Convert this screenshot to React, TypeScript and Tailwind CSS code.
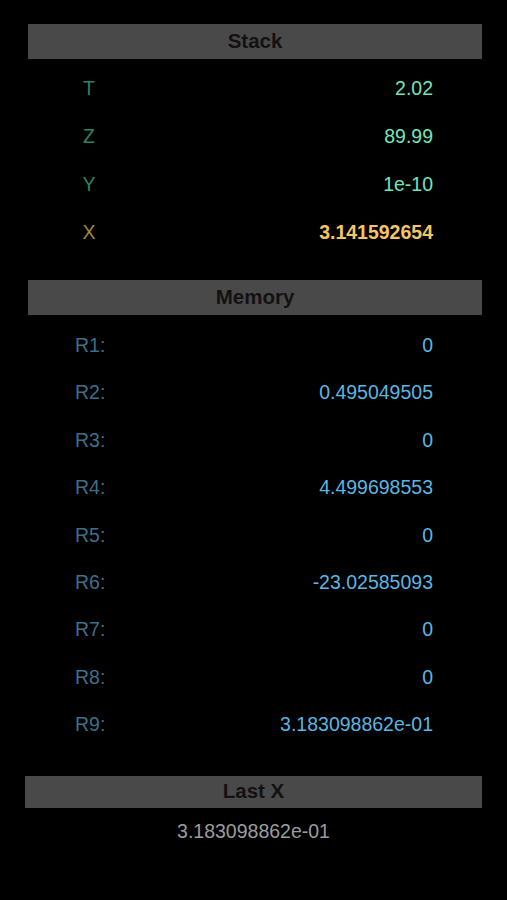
const stack = [
  { label: 'T', value: '2.02' },
  { label: 'Z', value: '89.99' },
  { label: 'Y', value: '1e-10' },
];

const memory = [
  ['R1:', '0'],
  ['R2:', '0.495049505'],
  ['R3:', '0'],
  ['R4:', '4.499698553'],
  ['R5:', '0'],
  ['R6:', '-23.02585093'],
  ['R7:', '0'],
  ['R8:', '0'],
  ['R9:', '3.183098862e-01'],
];

function Header({ title, className }: { title: string; className: string }) {
  return (
    <div className={`flex items-center justify-center bg-[#494949] text-[20.5px] font-bold text-[#121212] ${className}`}>
      {title}
    </div>
  );
}

export default function App() {
  return (
    <div
      className="min-h-[900px] w-[507px] bg-black pt-[24px] text-[19.5px]"
      style={{ fontFamily: '"Liberation Sans", Arial, sans-serif' }}
    >
      {/* Stack */}
      <Header title="Stack" className="ml-[28px] mr-[25px] h-[35px]" />
      <div className="mt-[6px]">
        {stack.map((r) => (
          <div key={r.label} className="flex h-[48px] items-center pr-[74px]">
            <span className="w-[24px] ml-[77px] text-center text-[#2f8268]">{r.label}</span>
            <span className="ml-auto text-[#74e4b8]">{r.value}</span>
          </div>
        ))}
        <div className="flex h-[48px] items-center pr-[74px]">
          <span className="w-[24px] ml-[77px] text-center text-[#9c8548]">X</span>
          <span className="ml-auto font-bold text-[#f4c662]">3.141592654</span>
        </div>
      </div>

      {/* Memory */}
      <Header title="Memory" className="mt-[23px] ml-[28px] mr-[25px] h-[35px]" />
      <div className="mt-[7px]">
        {memory.map(([k, v]) => (
          <div key={k} className="flex h-[47.4px] items-center pl-[75px] pr-[74px]">
            <span className="text-[#3e6f8a]">{k}</span>
            <span className="ml-auto text-[#5ab6e2]">{v}</span>
          </div>
        ))}
      </div>

      {/* Last X */}
      <Header title="Last X" className="mt-[27px] ml-[25px] mr-[25px] h-[32px]" />
      <div className="mt-[12px] text-center leading-[22px] text-[#9c9c9c]">3.183098862e-01</div>
    </div>
  );
}
